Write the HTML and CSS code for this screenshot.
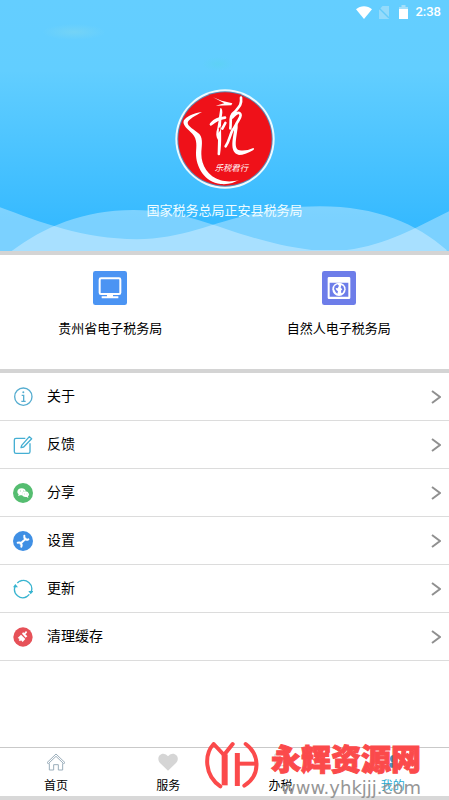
FILE: index.html
```html
<!DOCTYPE html>
<html lang="zh-CN">
<head>
<meta charset="utf-8">
<meta name="viewport" content="width=device-width, initial-scale=1">
<title>我的</title>
<link rel="stylesheet" href="styles.css">
</head>
<body>
<div class="app">
  <header class="hero">
    <svg class="waves" viewBox="0 0 1347 140" preserveAspectRatio="none" aria-hidden="true">
      <path d="M0 7C120 52 250 104 410 104C600 104 700 4 960 4C1130 4 1250 57 1340 137V140H0Z"/>
      <path d="M35 140C130 67 250 15 400 15C600 15 700 107 935 137H1040C1160 122 1250 67 1347 19V140Z"/>
    </svg>
    <div class="status">
      <svg class="wifi" viewBox="0 0 16 13" aria-hidden="true"><path d="M0 3.2C4.500-.7 11.500-.7 16 3.200L8 13Z" fill="#fff"/></svg>
      <svg class="sim" viewBox="0 0 10 13" aria-hidden="true"><path d="M3.500 0H10V13H0V4Z" fill="#a4dffa" opacity=".75"/><path d="M0 2L10 12" stroke="#64cbfa" stroke-width="1.300"/></svg>
      <svg class="battery" viewBox="0 0 9 14" aria-hidden="true"><path d="M0 2H2.500V0H6.500V2H9V5H0Z" fill="#a4dffa"/><path d="M0 4H9V14H0Z" fill="#fff"/></svg>
      <span class="time">2:38</span>
    </div>
    <svg class="emblem" viewBox="28 27 300 300" role="img" aria-label="税务徽标">
      <circle cx="178" cy="177" r="149" fill="#eefaff"/>
      <circle cx="178" cy="177" r="143" fill="#5d87b5"/>
      <circle cx="178" cy="177" r="140" fill="#ef1119"/>
      <path fill="#fff" d="M109 96C82 100 62 110 54 122C50 136 66 146 80 161C96 178 92 200 91 218C90 262 118 306 165 312C190 314 205 308 220 300C200 306 180 305 165 301C127 290 107 255 107 222C107 200 114 178 101 162C87 148 66 140 66 128C69 117 90 107 109 96Z"/>
      <path fill="#fff" d="M142 52L168 62L200 70L197 76L150 77L176 70Z"/>
      <path fill="#fff" d="M164 84Q170 84 170 98L167 120C164 148 170 182 163 224Q154 230 156 216L157 180C151 170 150 160 155 145L159 121Q143 126 136 136L132 133Q140 118 160 112Z"/>
      <path fill="none" stroke="#fff" stroke-linecap="round" stroke-linejoin="round" stroke-width="8" d="M136 133Q155 116 178 113M170 146L179 129M226 53C229 76 218 82 208 95C190 107 197 123 194 145M200 112C222 88 231 101 219 120C210 134 206 145 200 151C193 165 191 183 180 199"/>
      <path fill="#fff" d="M210 132Q217 126 216 143C212 176 203 207 222 211Q241 214 263 204Q268 206 262 211Q238 225 220 225C188 218 204 169 205 151Z"/>
      <path fill="#ef1119" d="M160 145l5-7-1 12-5 8z"/>
      <text class="motto" x="147" y="272">乐税君行</text>
    </svg>
    <h1 class="org">国家税务总局正安县税务局</h1>
  </header>

  <section class="services">
    <a class="service" href="#guizhou">
      <svg class="tile" viewBox="0 0 102 102" aria-hidden="true">
        <rect width="102" height="102" rx="7" fill="#4b94f3"/>
        <rect x="20" y="22" width="62" height="47" rx="4" fill="none" stroke="#fff" stroke-width="6"/>
        <path d="M42 69H60V76H76V82H26V76H42Z" fill="#fff"/>
      </svg>
      <span>贵州省电子税务局</span>
    </a>
    <a class="service" href="#person">
      <svg class="tile" viewBox="0 0 102 102" aria-hidden="true">
        <rect width="102" height="102" rx="7" fill="#6d7de9"/>
        <path d="M21 18H81Q85 18 85 22V80Q85 84 81 84H21Q17 84 17 80V22Q17 18 21 18ZM23 35V77H79V35Z" fill="#fff" fill-rule="evenodd"/>
        <circle cx="51" cy="55" r="20" fill="#fff"/>
        <path d="M38 45L46 40L51 44L47 52L41 51L43 57L48 61L46 68L41 64L36 54ZM58 42L64 46L67 55L62 65L58 67L57 59L61 55L56 50Z" fill="#6d7de9"/>
      </svg>
      <span>自然人电子税务局</span>
    </a>
  </section>

  <main class="menu">
    <a class="row" href="#about">
      <svg class="icon" viewBox="0 0 60 60" fill="none" stroke="#56add0" stroke-width="4" aria-hidden="true"><circle cx="31" cy="29" r="26"/><path d="M26 25H32V43M25 43H38"/><circle cx="31" cy="16" r="3" fill="#56add0" stroke="none"/></svg>
      <span class="label">关于</span>
      <svg class="chevron" viewBox="0 0 10 14" aria-hidden="true"><path d="M1 1L9 7L1 13"/></svg>
    </a>
    <a class="row" href="#feedback">
      <svg class="icon" viewBox="0 0 60 60" fill="none" stroke="#45afd3" stroke-width="4" stroke-linejoin="round" aria-hidden="true"><path d="M37 10H9Q4 10 4 15V50Q4 55 9 55H46Q51 55 51 50V25"/><path d="M26 31L49 5L56 11L32 36L24 38Z"/></svg>
      <span class="label">反馈</span>
      <svg class="chevron" viewBox="0 0 10 14" aria-hidden="true"><path d="M1 1L9 7L1 13"/></svg>
    </a>
    <a class="row" href="#share">
      <svg class="icon" viewBox="0 0 60 60" aria-hidden="true"><circle cx="30" cy="30" r="30" fill="#55bd70"/><path d="M26 16C18 16 13 21 13 27Q13 31 17 34L15 39L22 37H28Q25 27 38 24Q36 16 26 16Z" fill="#fff"/><path d="M38 25C31 25 27 29 27 34C27 40 33 43 41 42L46 45L45 40Q49 37 48 33Q46 25 38 25Z" fill="#fff"/><path d="M21 24h3M30 24h3M34 33h2M41 33h2" stroke="#a5dcb2" stroke-width="3"/></svg>
      <span class="label">分享</span>
      <svg class="chevron" viewBox="0 0 10 14" aria-hidden="true"><path d="M1 1L9 7L1 13"/></svg>
    </a>
    <a class="row" href="#settings">
      <svg class="icon" viewBox="0 0 60 60" aria-hidden="true"><circle cx="30" cy="30" r="30" fill="#3f8fe4"/><path d="M22 38L38 23M14 35Q21 33 24 36Q27 40 25 47M34 14Q33 21 36 24Q40 28 46 25" fill="none" stroke="#fff" stroke-width="6" stroke-linecap="round" stroke-linejoin="round"/></svg>
      <span class="label">设置</span>
      <svg class="chevron" viewBox="0 0 10 14" aria-hidden="true"><path d="M1 1L9 7L1 13"/></svg>
    </a>
    <a class="row" href="#update">
      <svg class="icon" viewBox="0 0 60 60" aria-hidden="true"><path d="M20 7A25 25 0 0 1 55 37M42 53A25 25 0 0 1 6 23M27 4A25 25 0 0 0 13 12M35 55A25 25 0 0 0 49 46" fill="none" stroke="#38b4d0" stroke-width="4"/><path d="M46 36H62L53 46ZM0 25L7 15L15 25Z" fill="#38b4d0"/></svg>
      <span class="label">更新</span>
      <svg class="chevron" viewBox="0 0 10 14" aria-hidden="true"><path d="M1 1L9 7L1 13"/></svg>
    </a>
    <a class="row" href="#cache">
      <svg class="icon" viewBox="0 0 60 60" aria-hidden="true"><circle cx="30" cy="30" r="29" fill="#e65158"/><path d="M34 18L38 13Q42 12 42 17L37 22L43 28L38 32L27 20L30 16Z" fill="#fff"/><path d="M24 23L37 36L29 45L24 40L21 43L17 39L20 36L14 33Z" fill="#fff"/></svg>
      <span class="label">清理缓存</span>
      <svg class="chevron" viewBox="0 0 10 14" aria-hidden="true"><path d="M1 1L9 7L1 13"/></svg>
    </a>
  </main>

  <footer class="bottom">
    <nav class="tabs">
      <a class="tab" href="#home">
        <svg viewBox="0 0 60 54" fill="none" stroke="#9baebb" stroke-width="3" stroke-linejoin="round" aria-hidden="true"><path d="M3 29L30 3L57 29L53 32L30 10L7 32ZM10 31V51H23V35H37V51H50V31"/></svg>
        <span>首页</span>
      </a>
      <a class="tab" href="#service">
        <svg viewBox="0 0 60 54" aria-hidden="true"><path d="M30 53L6 30C-4 18 2 2 16 2Q25 2 30 10Q35 2 44 2C58 2 65 18 54 30Z" fill="#d5d5d5"/></svg>
        <span>服务</span>
      </a>
      <a class="tab" href="#tax">
        <svg viewBox="0 0 60 54" fill="none" stroke="#c8ccd0" stroke-width="3" aria-hidden="true"><path d="M12 3H48V48H12ZM20 16H40M20 27H40M20 38H40"/></svg>
        <span>办税</span>
      </a>
      <a class="tab active" href="#mine" aria-current="page">
        <svg viewBox="0 0 60 54" fill="#4b8fc0" aria-hidden="true"><circle cx="32" cy="17" r="11"/><path d="M14 44Q16 28 32 28Q50 28 52 44Z"/></svg>
        <span>我的</span>
      </a>
    </nav>
    <div class="brand">
      <svg class="brand-mark" viewBox="12 8 162 144" fill="none" stroke="#fb4a4b" stroke-linecap="round" stroke-linejoin="round" aria-hidden="true">
        <path stroke-width="12" d="M38 17C9 48 10 112 58 144M38 17L69 50L95 17M134 17C178 50 178 112 130 142"/>
        <path stroke-width="18" stroke-linecap="butt" d="M71 48V141"/>
        <path stroke-width="15" stroke-linecap="butt" d="M109 44V143"/>
        <path stroke-width="12" stroke-linecap="butt" d="M108 76H166"/>
      </svg>
      <div class="brand-text">
        <strong>永辉资源网</strong>
        <span>www.yhkjjj.com</span>
      </div>
    </div>
  </footer>
</div>
</body>
</html>
```
FILE: styles.css
```css
* {
  box-sizing: border-box;
}

body {
  margin: 0;
  background: #fff;
  color: #000;
  font-family: Roboto, "Noto Sans CJK SC", sans-serif;
}

a {
  color: inherit;
  text-decoration: none;
}

svg {
  display: block;
}

.app {
  display: flex;
  flex-direction: column;
  min-height: 100vh;
}

.hero {
  position: relative;
  display: flex;
  flex-direction: column;
  align-items: center;
  padding-bottom: 30px;
  background:
    radial-gradient(ellipse 32px 8px at 74px 32px, #74d3f6, transparent),
    radial-gradient(ellipse 16px 7px at 218px 64px, #5ed1f6, transparent),
    linear-gradient(#64ceff 0%, #62ceff 28%, #37baff 88%);
}

.waves {
  position: absolute;
  left: 0;
  bottom: 0;
  width: 100%;
  height: 46px;
  fill: #fff;
  fill-opacity: 0.34;
}

.status {
  display: flex;
  align-items: center;
  align-self: flex-end;
  height: 24px;
  padding-right: 8px;
  color: #fff;
}

.wifi {
  width: 16px;
  height: 13px;
  margin-right: 7px;
}

.sim {
  width: 10px;
  height: 13px;
  margin-right: 10px;
}

.battery {
  width: 9px;
  height: 14px;
  margin-right: 7px;
}

.time {
  font-size: 13px;
  font-weight: 500;
  line-height: 24px;
}

.emblem {
  width: 100px;
  height: 100px;
  margin-top: 65px;
}

.motto {
  fill: #fff;
  font-family: "Noto Sans CJK SC", sans-serif;
  font-size: 25px;
  font-style: italic;
}

.org {
  position: relative;
  margin: 12px 0 0;
  color: #effcff;
  font-size: 13px;
  font-weight: 400;
  line-height: 20px;
}

.services {
  display: grid;
  grid-template-columns: 1fr 1fr;
  column-gap: 8px;
  padding: 16px 0 30px;
  border-top: 4px solid #d4d4d4;
  border-bottom: 4px solid #d4d4d4;
}

.service {
  display: flex;
  flex-direction: column;
  align-items: center;
  gap: 14px;
  font-size: 13px;
  line-height: 20px;
}

.tile {
  width: 34px;
  height: 34px;
}

.row {
  display: flex;
  align-items: center;
  height: 48px;
  padding: 0 8px 0 13px;
  border-bottom: 1px solid #dcdcdc;
}

.icon {
  width: 20px;
  height: 20px;
}

.label {
  flex: 1;
  padding-bottom: 2px;
  margin-left: 14px;
  font-size: 14px;
  line-height: 20px;
}

.chevron {
  width: 10px;
  height: 14px;
  fill: none;
  stroke: #909090;
  stroke-width: 2;
}

.bottom {
  position: relative;
  margin-top: auto;
  border-top: 1px solid #c9c9c9;
  border-bottom: 4px solid #d8d8d8;
}

.tabs {
  display: grid;
  grid-template-columns: repeat(4, 1fr);
}

.tab {
  display: flex;
  flex-direction: column;
  align-items: center;
  gap: 6px;
  padding: 5px 0 1px;
  font-size: 12px;
  line-height: 18px;
}

.tab svg {
  width: 20px;
  height: 18px;
}

.active {
  color: #27a9d0;
}

.brand {
  position: absolute;
  top: -7px;
  right: 28px;
  display: flex;
  gap: 12px;
  pointer-events: none;
}

.brand-mark {
  width: 54px;
  height: 48px;
}

.brand-text {
  display: flex;
  flex-direction: column;
  align-items: flex-end;
}

.brand-text strong {
  color: #fb4a4b;
  font-size: 30px;
  font-weight: 900;
  line-height: 38px;
  -webkit-text-stroke: 1px #fb4a4b;
}

.brand-text span {
  color: #969696;
  font-family: "DejaVu Sans", sans-serif;
  font-size: 18px;
  line-height: 18px;
}
```
